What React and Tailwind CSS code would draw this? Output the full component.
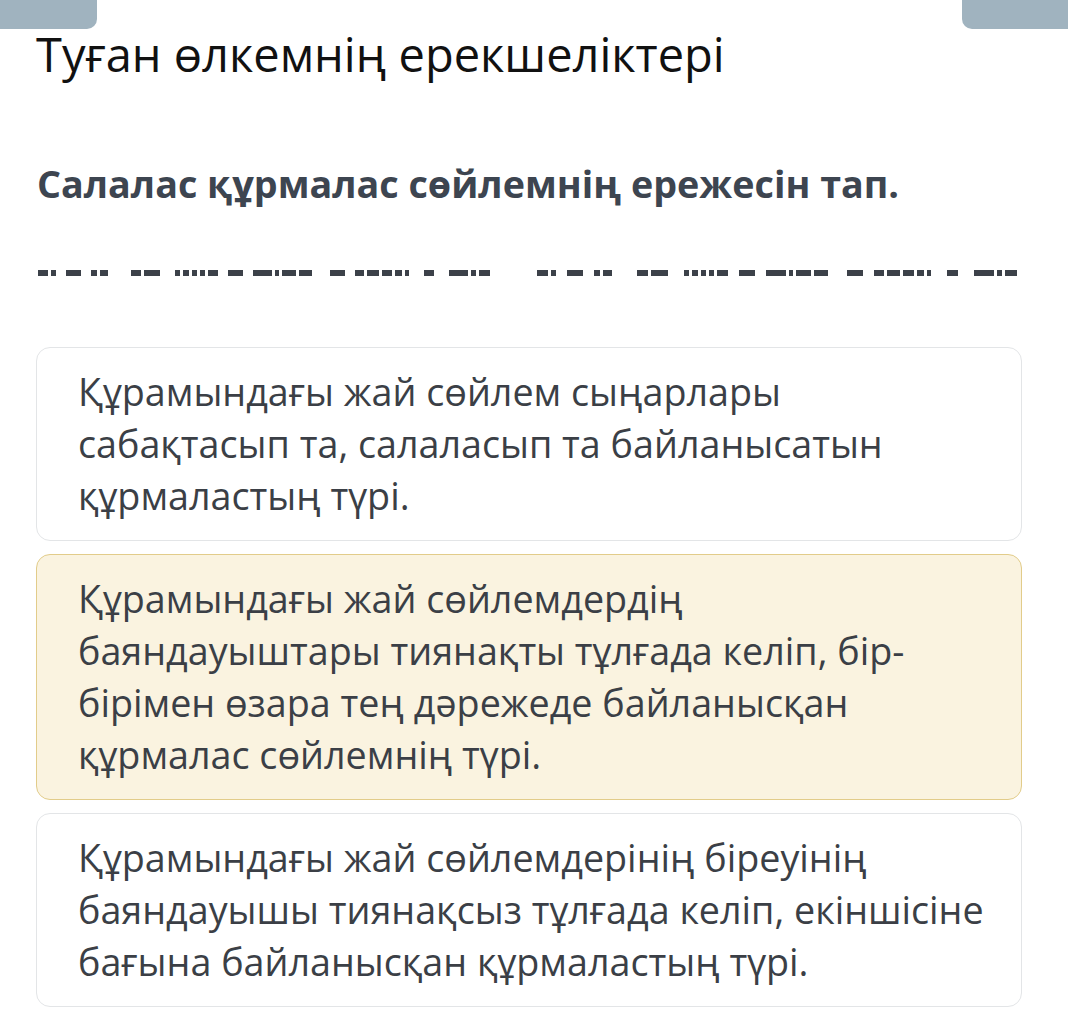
const half = [
  [[10, 5]],
  [[15]],
  [[6, 8]],
  [[10, 16]],
  [[5, 6, 5, 5, 10]],
  [[15]],
  [[19, 4, 14, 13]],
  [[15]],
  [[9, 12, 10, 7, 4]],
  [[10]],
  [[19, 5, 11]],
]
const groupGaps = [0, 10, 10, 23, 15, 10, 10, 18, 10, 15, 15]

function Redacted({ scale = 1 }) {
  return (
    <div className="flex items-center">
      {half.map((g, i) => (
        <div
          key={i}
          className="flex gap-[3px]"
          style={{ marginLeft: Math.round(groupGaps[i] * scale) }}
        >
          {g[0].map((w, j) => (
            <div key={j} className="h-[6px] bg-[#3c4149]" style={{ width: Math.round(w * scale) }} />
          ))}
        </div>
      ))}
    </div>
  )
}

const options = [
  {
    lines: ['Құрамындағы жай сөйлем сыңарлары', 'сабақтасып та, салаласып та байланысатын', 'құрмаластың түрі.'],
    picked: false,
  },
  {
    lines: [
      'Құрамындағы жай сөйлемдердің',
      'баяндауыштары тиянақты тұлғада келіп, бір-',
      'бірімен өзара тең дәрежеде байланысқан',
      'құрмалас сөйлемнің түрі.',
    ],
    picked: true,
  },
  {
    lines: [
      'Құрамындағы жай сөйлемдерінің біреуінің',
      'баяндауышы тиянақсыз тұлғада келіп, екіншісіне',
      'бағына байланысқан құрмаластың түрі.',
    ],
    picked: false,
  },
]

export default function App() {
  return (
    <div className="w-[1068px] h-[1031px] bg-white overflow-hidden font-['Open_Sans',sans-serif]">
      <div className="flex justify-between h-[29px]">
        <div className="w-[97px] h-full bg-[#a0b3bf] rounded-br-[10px]" />
        <div className="w-[106px] h-full bg-[#a0b3bf] rounded-bl-[10px]" />
      </div>

      <h1 className="pl-[36px] text-[47px] leading-[50px] text-[#111111] whitespace-nowrap">
        Туған өлкемнің ерекшеліктері
      </h1>

      <h2 className="mt-[81px] pl-[37px] text-[37.7px] leading-[48px] font-bold text-[#3d4550] whitespace-nowrap">
        Салалас құрмалас сөйлемнің ережесін тап.
      </h2>

      <div className="mt-[62px] pl-[38px] flex items-center">
        <Redacted />
        <div className="ml-[47px]">
          <Redacted scale={1.07} />
        </div>
      </div>

      <div className="mt-[71px] pl-[36px] w-[1022px] flex flex-col gap-[13px]">
        {options.map((o, i) => (
          <div
            key={i}
            className={
              o.picked
                ? 'rounded-[14px] border border-[#e2cc8a] bg-[#faf3e0] pl-[41px] pr-[20px] py-[18px]'
                : 'rounded-[14px] border border-[#e3e5e7] bg-white pl-[41px] pr-[20px] py-[18px]'
            }
          >
            <div className="text-[37.7px] leading-[52px] text-[#3b3f46]">
              {o.lines.map((l, j) => (
                <div key={j} className="whitespace-nowrap">{l}</div>
              ))}
            </div>
          </div>
        ))}
      </div>
    </div>
  )
}
